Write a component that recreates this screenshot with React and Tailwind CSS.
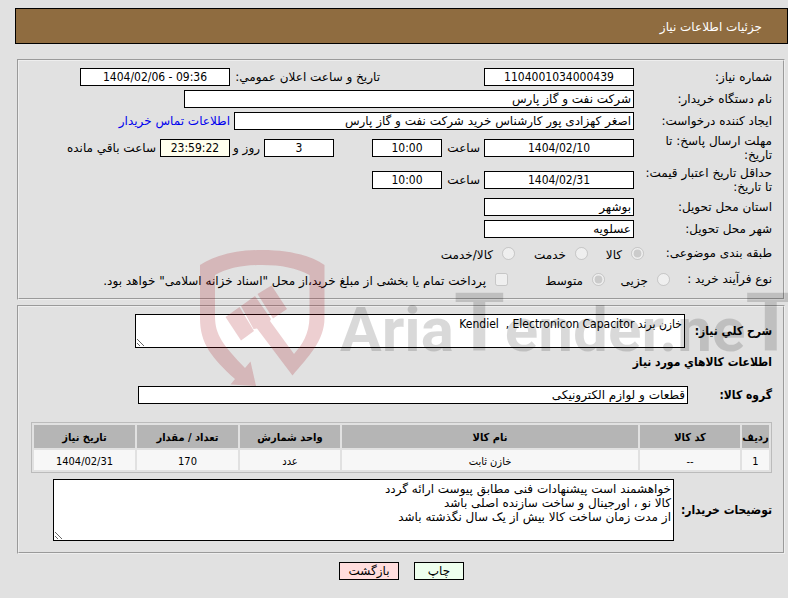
import React from "react";

const fieldBase =
  "h-[18px] shrink-0 rounded-none border border-black px-[2px] text-[12px] leading-[14px] outline-none";

function Field({ id, label, value, width, center, tint = "bg-white" }) {
  return (
    <input
      id={id}
      aria-label={label}
      type="text"
      readOnly
      dir={center ? "ltr" : "rtl"}
      defaultValue={value}
      className={`${fieldBase} ${width} ${tint} ${
        center
          ? "text-center [font-family:'DejaVu_Sans_Condensed','DejaVu_Sans',sans-serif]"
          : "text-right"
      }`}
    />
  );
}

function Row({ label, htmlFor, height = "min-h-[22px]", children }) {
  return (
    <div className={`flex items-center gap-1 ${height}`}>
      <label htmlFor={htmlFor} className="w-[134px] shrink-0 leading-[14px]">
        {label}
      </label>
      {children}
    </div>
  );
}

function Choice({ name, label, checked, type = "radio", width = "" }) {
  return (
    <label className={`flex shrink-0 items-center gap-[9px] whitespace-nowrap ${width}`}>
      <input
        type={type}
        name={name}
        disabled
        defaultChecked={checked}
        className="m-0 h-[13px] w-[13px] shrink-0"
      />
      <span className="pt-1">{label}</span>
    </label>
  );
}

function Panel({ className, children }) {
  return (
    <section
      className={`ml-[17px] mr-[3px] border-2 border-[#eeeeee] [border-style:groove] ${className}`}
    >
      {children}
    </section>
  );
}

function Watermark() {
  return (
    <div
      aria-hidden="true"
      className="pointer-events-none absolute inset-0 overflow-hidden"
    >
      <svg
        className="absolute left-[190px] top-[240px] h-[155px] w-[620px]"
        viewBox="0 0 620 155"
      >
        <g fill="#a50f19" fillOpacity="0.2">
          <path
            fillRule="evenodd"
            d="M10 25C26 15 46 10 72 10C98 10 120 15 134.500 25V78C134.500 101 118 117 102.500 135.500L67 88.500L63.500 89L51 66L65 56L81 79L80 81L104 114C112 105 119.500 94 119.500 76V35C106 28 92 25 72 25C52 25 38 28 25 35V76C25 95 33 105 55 128L60.500 121.500L66 146L40.500 144.500L45 139C22 118 10 104 10 78Z"
          />
          <path d="M35.500 77L49.500 67L64 91L51 100.500Z" />
          <path d="M67.500 54L81.500 45.500L97 69L83 78.500Z" />
        </g>
        <text
          direction="ltr"
          x="150"
          y="111"
          fill="#000000"
          fillOpacity="0.15"
          fontFamily="Roboto, 'Liberation Sans', sans-serif"
          fontWeight="700"
          fontSize="62"
        >
          Aria<tspan fontSize="82">T</tspan>ender.ne<tspan fontSize="82">T</tspan>
        </text>
      </svg>
    </div>
  );
}

const columns = [
  { title: "ردیف", width: "w-[27px]" },
  { title: "کد کالا", width: "w-[100px]" },
  { title: "نام کالا", width: "" },
  { title: "واحد شمارش", width: "w-[100px]" },
  { title: "تعداد / مقدار", width: "w-[101px]" },
  { title: "تاریخ نیاز", width: "w-[101px]" },
];

const items = [["1", "--", "خازن ثابت", "عدد", "170", "1404/02/31"]];

const buyerNotes =
  "خواهشمند است پیشنهادات فنی مطابق پیوست ارائه گردد\nکالا نو ، اورجینال و ساخت سازنده اصلی باشد\nاز مدت زمان ساخت کالا بیش از یک سال نگذشته باشد";

export default function App() {
  return (
    <div
      dir="rtl"
      className="relative min-h-screen bg-[#e1e1e1] pt-2 text-[12px] leading-[14px] text-black [font-family:'DejaVu_Sans',sans-serif]"
    >
      <header className="ml-[15px] flex h-9 items-center border border-black bg-[#8f6c40] px-[25px]">
        <h1 className="pt-[2px] text-white">جزئیات اطلاعات نیاز</h1>
      </header>

      <Panel className="mt-[15px] pb-[6px] pl-[11px] pr-[11px] pt-[5px]">
        <Row label="شماره نیاز:" htmlFor="need-no">
          <Field id="need-no" value="1104001034000439" width="w-[150px]" center />
          <label htmlFor="announce" className="mr-[100px] w-[146px] shrink-0 whitespace-nowrap">
            تاریخ و ساعت اعلان عمومي:
          </label>
          <Field id="announce" value="1404/02/06 - 09:36" width="w-[150px]" center />
        </Row>
        <Row label="نام دستگاه خریدار:" htmlFor="buyer">
          <Field id="buyer" value="شرکت نفت و گاز پارس" width="w-[450px]" />
        </Row>
        <Row label="ایجاد کننده درخواست:" htmlFor="creator">
          <Field
            id="creator"
            value="اصغر کهزادی پور کارشناس خرید شرکت نفت و گاز پارس"
            width="w-[400px]"
          />
          <a href="#contact" className="whitespace-nowrap text-[#0000ee]">
            اطلاعات تماس خریدار
          </a>
        </Row>
        <Row
          height="min-h-8"
          htmlFor="deadline"
          label={
            <>
              مهلت ارسال پاسخ: تا
              <br />
              تاریخ:
            </>
          }
        >
          <Field id="deadline" value="1404/02/10" width="w-[150px]" center />
          <label htmlFor="deadline-hour" className="w-[34px] shrink-0">
            ساعت
          </label>
          <Field id="deadline-hour" value="10:00" width="w-[70px]" center />
          <div className="mr-[34px] flex items-center gap-1">
            <Field label="روز" value="3" width="w-[70px]" center />
            <span className="w-[26px] shrink-0 whitespace-nowrap">روز و</span>
            <Field
              label="ساعت باقي مانده"
              value="23:59:22"
              width="w-[70px]"
              tint="bg-[#ffffee]"
              center
            />
            <span className="whitespace-nowrap">ساعت باقي مانده</span>
          </div>
        </Row>
        <Row
          height="min-h-8"
          htmlFor="validity"
          label={
            <>
              حداقل تاریخ اعتبار قیمت:
              <br />
              تا تاریخ:
            </>
          }
        >
          <Field id="validity" value="1404/02/31" width="w-[150px]" center />
          <label htmlFor="validity-hour" className="w-[34px] shrink-0">
            ساعت
          </label>
          <Field id="validity-hour" value="10:00" width="w-[70px]" center />
        </Row>
        <Row label="استان محل تحویل:" htmlFor="province">
          <Field id="province" value="بوشهر" width="w-[150px]" />
        </Row>
        <Row label="شهر محل تحویل:" htmlFor="city">
          <Field id="city" value="عسلویه" width="w-[150px]" />
        </Row>
        <div role="group" aria-labelledby="category" className="flex h-[26px] items-center">
          <span id="category" className="w-[128px] shrink-0">
            طبقه بندی موضوعی:
          </span>
          <Choice name="category" label="کالا" checked width="w-[56px]" />
          <Choice name="category" label="خدمت" width="w-[73px]" />
          <Choice name="category" label="کالا/خدمت" />
        </div>
        <div role="group" aria-labelledby="process" className="flex h-[26px] items-center">
          <span id="process" className="w-[102px] shrink-0">
            نوع فرآیند خرید :
          </span>
          <Choice name="process" label="جزیی" width="w-[65px]" />
          <Choice name="process" label="متوسط" checked width="w-[97px]" />
          <Choice
            type="checkbox"
            label='پرداخت تمام یا بخشی از مبلغ خرید،از محل "اسناد خزانه اسلامی" خواهد بود.'
          />
        </div>
      </Panel>

      <Panel className="mt-[5px] pb-[11px] pl-3 pr-[11px] pt-[7px]">
        <div className="flex items-center gap-1">
          <label
            htmlFor="summary"
            className="w-[83px] shrink-0 whitespace-nowrap font-bold [font-family:'DejaVu_Sans_Condensed','DejaVu_Sans',sans-serif]"
          >
            شرح كلي نياز:
          </label>
          <textarea
            id="summary"
            readOnly
            defaultValue="خازن برند Kendiel  , Electronicon Capacitor"
            className="block h-[34px] w-[550px] border border-black bg-white p-[2px] leading-[14px] outline-none [font-family:'DejaVu_Sans_Condensed','DejaVu_Sans',sans-serif]"
          />
        </div>
        <h2 className="mt-[7px] font-bold [font-family:'DejaVu_Sans_Condensed','DejaVu_Sans',sans-serif]">
          اطلاعات كالاهاي مورد نياز
        </h2>
        <div className="mt-[17px] flex items-center gap-1">
          <label
            htmlFor="group"
            className="w-20 shrink-0 font-bold [font-family:'DejaVu_Sans_Condensed','DejaVu_Sans',sans-serif]"
          >
            گروه کالا:
          </label>
          <Field id="group" value="قطعات و لوازم الکترونیکی" width="w-[550px]" />
        </div>

        <table className="mt-[18px] w-full table-fixed border-separate border-spacing-[2px] border border-[#bbbbbb] text-center text-[11px] [font-family:'DejaVu_Sans_Condensed','DejaVu_Sans',sans-serif]">
          <thead>
            <tr className="h-[23px] bg-[#b5b5b5]">
              {columns.map((c) => (
                <th
                  key={c.title}
                  scope="col"
                  className={`whitespace-nowrap px-0 pb-0 pt-[2px] ${c.width}`}
                >
                  {c.title}
                </th>
              ))}
            </tr>
          </thead>
          <tbody>
            {items.map((row) => (
              <tr key={row[0]} className="h-5 bg-[#f7f7f7]">
                {row.map((cell, i) => (
                  <td key={i} className="px-0 pb-0 pt-[3px]">
                    {cell}
                  </td>
                ))}
              </tr>
            ))}
          </tbody>
        </table>

        <div className="mt-[6px] flex items-center gap-1">
          <label
            htmlFor="notes"
            className="w-[94px] shrink-0 whitespace-nowrap font-bold [font-family:'DejaVu_Sans_Condensed','DejaVu_Sans',sans-serif]"
          >
            توضیحات خریدار:
          </label>
          <textarea
            id="notes"
            readOnly
            defaultValue={buyerNotes}
            className="block h-[62px] w-[621px] border border-black bg-white p-[2px] leading-[14px] outline-none"
          />
        </div>
      </Panel>

      <div className="ml-[15px] mt-2 flex justify-center gap-[15px]">
        <button type="button" className="h-[18px] w-[50px] border border-black bg-[#eeffee]">
          چاپ
        </button>
        <button type="button" className="h-[18px] w-[60px] border border-black bg-[#ffdddd]">
          بازگشت
        </button>
      </div>

      <Watermark />
    </div>
  );
}
